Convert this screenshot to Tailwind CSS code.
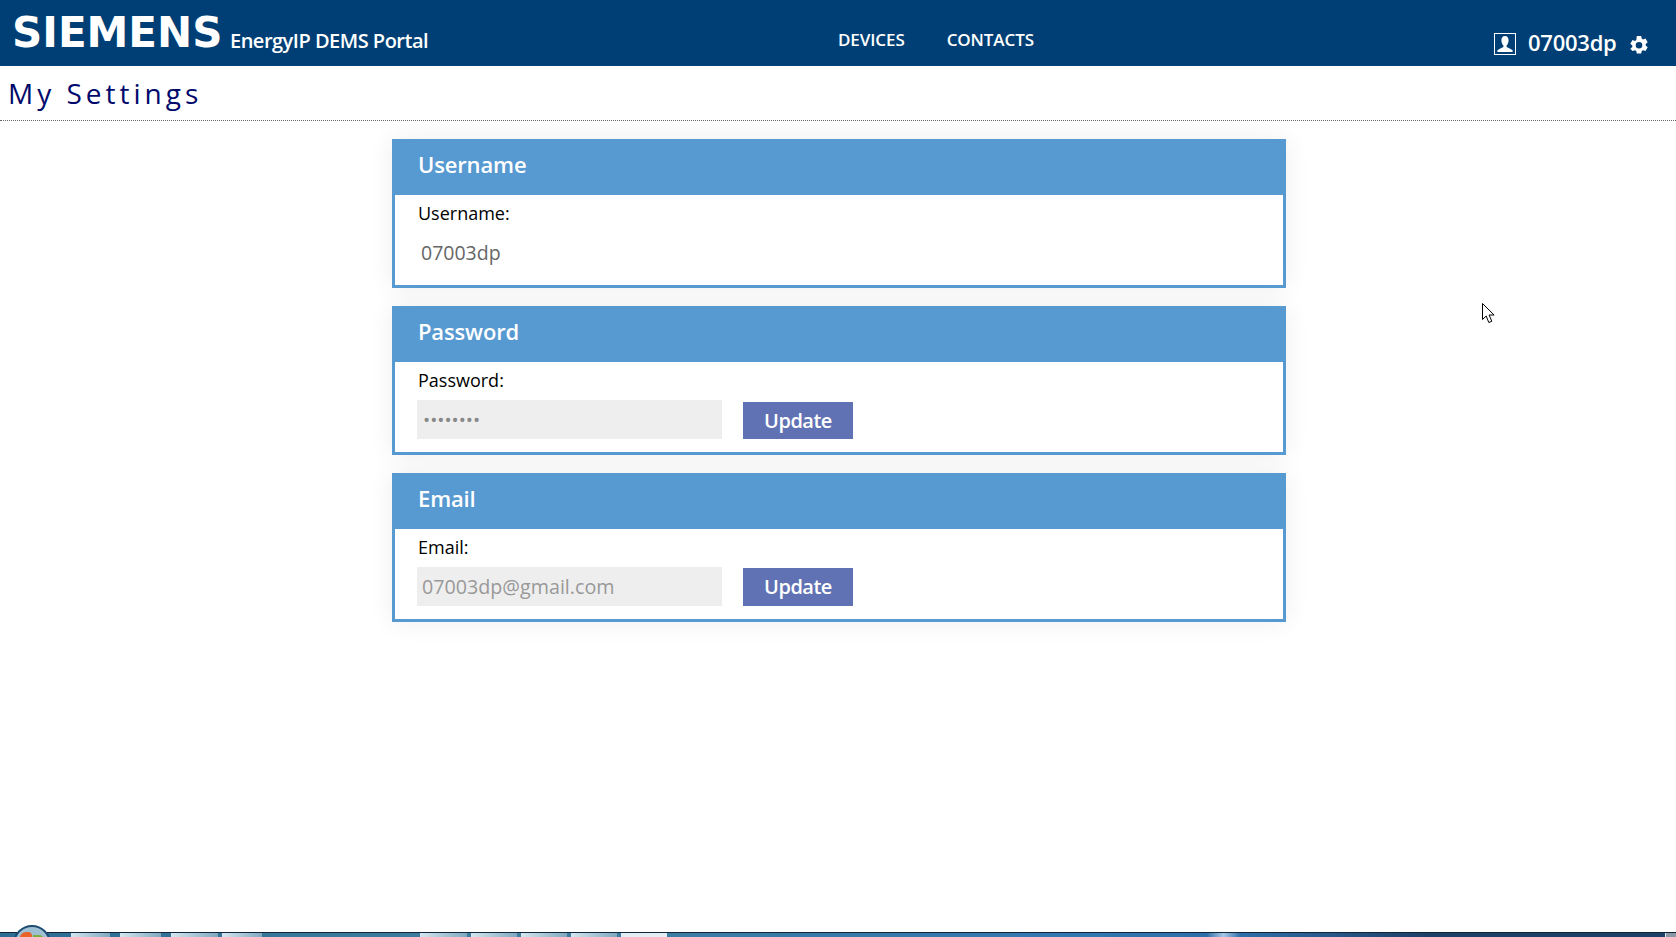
<!DOCTYPE html>
<html lang="en">
<head>
  <meta charset="UTF-8" />
  <title>My Settings</title>
  <script src="https://cdn.jsdelivr.net/npm/@tailwindcss/browser@4"></script>
</head>
<body class="relative h-[937px] w-[1676px] overflow-hidden flex flex-col bg-white font-['Open_Sans',sans-serif]">

  <!-- Header -->
  <header class="h-[66px] shrink-0 bg-[#003f75] text-white flex">
    <div class="w-[640px] flex items-start pl-[12px]">
      <span class="w-[218px] mt-[4px] text-[42px] leading-[58px] font-bold font-['DejaVu_Sans',sans-serif] tracking-[0px]">SIEMENS</span>
      <span class="mt-[26px] text-[20px] leading-[30px] font-semibold tracking-[-0.5px]">EnergyIP DEMS Portal</span>
    </div>
    <nav class="flex-1 flex justify-start pl-[198px] pt-[28px] gap-[42px] text-[17px] leading-[24px] font-semibold tracking-[-0.1px]">
      <a href="#">DEVICES</a>
      <a href="#">CONTACTS</a>
    </nav>
    <div class="w-[182px] flex items-start pt-[33px]">
      <svg class="w-[22px] h-[22px]" viewBox="0 0 22 22">
        <rect x="0.5" y="0.5" width="21" height="21" fill="none" stroke="#fff" />
        <path d="M11 3c2.400 0 3.600 2 3.600 4.300s-1.200 4.500-2 5.200v1.600c1 .8 4 1.600 6 3.200v1.700H3.400v-1.700c2-1.600 5-2.400 6-3.200v-1.600c-.8-.7-2-2.900-2-5.200S8.600 3 11 3z" fill="#fff" />
      </svg>
      <span class="ml-[12px] -mt-[5px] text-[22px] leading-[28px] font-semibold tracking-[-0.25px]">07003dp</span>
      <svg class="ml-[12px] mt-[2px] w-[20px] h-[20px]" viewBox="0 0 20 20">
        <path fill="#fff" fill-rule="evenodd" d="M7.800 1h4.400l.5 2.600 1.300.8 2.500-.9 2.200 3.800-2 1.700v1.600l2 1.700-2.200 3.800-2.500-.9-1.300.8-.5 2.600H7.800l-.5-2.600-1.300-.8-2.500.9L1.300 13.800l2-1.700v-1.600l-2-1.700 2.200-3.800 2.500.9 1.300-.8L7.800 1zM10 7a3.300 3.300 0 100 6.600A3.300 3.300 0 0010 7z" />
      </svg>
    </div>
  </header>

  <!-- Page title -->
  <div class="h-[55px] shrink-0 border-b border-dotted border-[#666] pl-[8px] pt-[8px]">
    <h1 class="text-[28px] leading-[38px] tracking-[4px] text-[#00096b] font-medium">My Settings</h1>
  </div>

  <!-- Cards -->
  <main class="flex-1 pt-[18px] pl-[392px]">
    <div class="w-[894px] flex flex-col gap-[18px]">

      <section class="h-[149px] border-[3px] border-[#5799d1] bg-white shadow-[0_0_24px_rgba(0,0,0,0.07)]">
        <h2 class="h-[53px] bg-[#5799d1] pl-[23px] pt-[7px] text-white text-[22px] leading-[30px] font-semibold tracking-[-0.15px]">Username</h2>
        <div class="pl-[23px] pt-[6px]">
          <label class="block text-[18px] leading-[24px] text-black">Username:</label>
          <div class="mt-[14px] pl-[3px] text-[19.5px] leading-[28px] text-[#666]">07003dp</div>
        </div>
      </section>

      <section class="h-[149px] border-[3px] border-[#5799d1] bg-white shadow-[0_0_24px_rgba(0,0,0,0.07)]">
        <h2 class="h-[53px] bg-[#5799d1] pl-[23px] pt-[7px] text-white text-[22px] leading-[30px] font-semibold tracking-[-0.15px]">Password</h2>
        <div class="pl-[22px] pt-[6px]">
          <label class="block pl-[1px] text-[18px] leading-[24px] text-black">Password:</label>
          <div class="mt-[8px] flex items-start gap-[21px]">
            <input type="password" value="12345678" readonly class="w-[305px] h-[39px] bg-[#eeeeee] pl-[6px] text-[19px] text-[#888] outline-none" />
            <button class="mt-[2px] w-[110px] h-[37px] bg-[#6072b3] text-white text-[20px] leading-[37px] font-semibold tracking-[-0.5px]">Update</button>
          </div>
        </div>
      </section>

      <section class="h-[149px] border-[3px] border-[#5799d1] bg-white shadow-[0_0_24px_rgba(0,0,0,0.07)]">
        <h2 class="h-[53px] bg-[#5799d1] pl-[23px] pt-[7px] text-white text-[22px] leading-[30px] font-semibold tracking-[-0.15px]">Email</h2>
        <div class="pl-[22px] pt-[6px]">
          <label class="block pl-[1px] text-[18px] leading-[24px] text-black">Email:</label>
          <div class="mt-[8px] flex items-start gap-[21px]">
            <input type="text" value="07003dp@gmail.com" readonly class="w-[305px] h-[39px] bg-[#eeeeee] pl-[5px] text-[19.7px] text-[#999] outline-none" />
            <button class="mt-[1px] w-[110px] h-[38px] bg-[#6072b3] text-white text-[20px] leading-[38px] font-semibold tracking-[-0.5px]">Update</button>
          </div>
        </div>
      </section>
    </div>
  </main>

  <!-- Mouse pointer caught in the screenshot -->
  <svg class="absolute left-[1482px] top-[303px] w-[13px] h-[21px]" viewBox="0 0 13 21">
    <path d="M.5.500v16l3.700-3.500 2.600 6.500 3-1.200-2.700-6.300h5L.5.500z" fill="#fff" stroke="#000" />
  </svg>

  <!-- Windows taskbar, cut off by the bottom of the screenshot -->
  <footer class="h-[5px] shrink-0 border-t border-[#10253a] bg-[linear-gradient(to_right,#2d6d94_0%,#3f7fa0_30%,#3277b0_65%,#2f6fa8_72%,#a8c8e6_73%,#2f6fa8_74%,#1d4068_85%,#1d4068_100%)] flex">
    <div class="ml-[71px] flex gap-[10px]">
      <div class="w-[39px] bg-gradient-to-r from-[#d6e6ee] to-[#7fa9c0]"></div>
      <div class="w-[41px] bg-gradient-to-r from-[#d6e6ee] to-[#7fa9c0]"></div>
      <div class="w-[47px] bg-gradient-to-r from-[#d6e6ee] to-[#7fa9c0]"></div>
      <div class="w-[40px] -ml-[6px] bg-gradient-to-r from-[#d6e6ee] to-[#7fa9c0]"></div>
    </div>
    <div class="ml-[158px] flex gap-[4px]">
      <div class="w-[47px] bg-gradient-to-r from-[#d6e6ee] to-[#7fa9c0]"></div>
      <div class="w-[46px] bg-gradient-to-r from-[#d6e6ee] to-[#7fa9c0]"></div>
      <div class="w-[46px] bg-gradient-to-r from-[#d6e6ee] to-[#7fa9c0]"></div>
      <div class="w-[46px] bg-gradient-to-r from-[#d6e6ee] to-[#7fa9c0]"></div>
      <div class="w-[46px] bg-[#e4edf2]"></div>
    </div>
    <div class="ml-auto w-[11px] bg-[#8a98a6] border-l border-[#dfe6ec]"></div>
  </footer>
  <div class="absolute left-[13px] top-[925px] w-[38px] h-[38px] rounded-full border-2 border-[#1d4a70] bg-[#9fc0d2] overflow-hidden flex items-start justify-center gap-[1px] pt-[5px]">
    <div class="w-[12px] h-[12px] bg-[#e8622a] rounded-tl-[6px] rounded-tr-[4px]"></div>
    <div class="w-[11px] h-[10px] mt-[3px] bg-[#7fae3a] rounded-tr-[5px]"></div>
  </div>
</body>
</html>
